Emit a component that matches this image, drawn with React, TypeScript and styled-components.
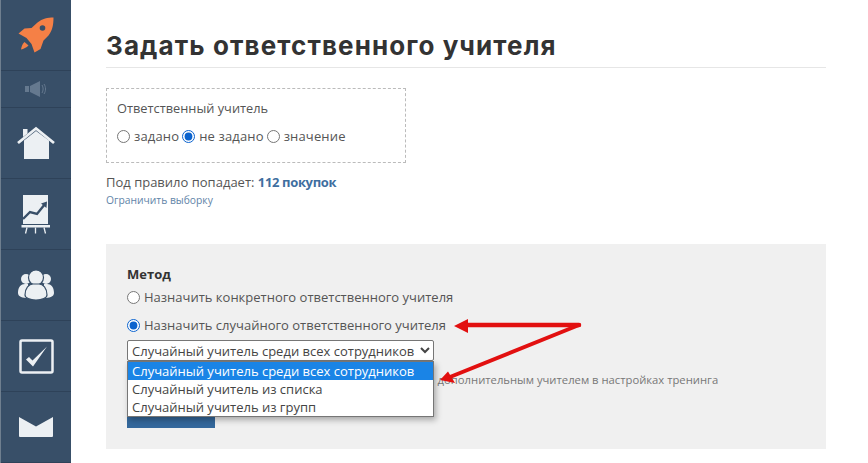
import React from "react";
import styled, { createGlobalStyle } from "styled-components";

const GlobalStyle = createGlobalStyle`
  html, body {
    margin: 0;
    padding: 0;
    background: #fff;
    overflow: hidden;
  }
  body {
    font-family: "Open Sans", "Noto Sans", "Liberation Sans", sans-serif;
    color: #555;
  }
`;

const options = [
  "Случайный учитель среди всех сотрудников",
  "Случайный учитель из списка",
  "Случайный учитель из групп",
];

const App = () => {
  return (
    <Page>
      <GlobalStyle />
      <Sidebar>
        <LogoCell>
          <svg width="38" height="38" viewBox="17.500 15.500 38 38">
            <path
              d="M54 17C48 17 43 18 38 22L32 27.500 25 28 19 33 27 37.500 32 43.500 35 52 41 48.500 44 40 49 35C53 30 54 24 54 17Z"
              fill="#f58046"
            />
            <circle cx="43" cy="27.500" r="2.800" fill="#384f68" />
            <path d="M21.500 49C22 46 23 43 25 41.500L29 45C27 47 24 48.500 21.500 49Z" fill="#f58046" />
          </svg>
        </LogoCell>
        <SoundCell>
          <svg width="24" height="16" viewBox="0 0 24 16">
            <rect x="1" y="5" width="4" height="6" fill="#65798f" />
            <path d="M6 5l10-5v16L6 11z" fill="#65798f" />
            <path d="M18 4c1.500 2.500 1.500 5.500 0 8M20 3c2 3 2 7 0 10" fill="none" stroke="#65798f" />
          </svg>
        </SoundCell>
        <NavCell>
          <svg width="38" height="34" viewBox="0 0 38 34">
            <path d="M7 14.500L19 5l13 9.500V33H7z" fill="#ecf0f3" />
            <path d="M1 17L19 2.500 37 17" fill="none" stroke="#ecf0f3" strokeWidth="2.800" />
            <path d="M6 3h4.500v4.500L6 11z" fill="#ecf0f3" />
          </svg>
        </NavCell>
        <NavCell>
          <svg width="30" height="39" viewBox="0 0 30 39">
            <rect x="2" y="0" width="25" height="29" fill="#ecf0f3" />
            <path d="M2 24l7-7 7 2 8-10" fill="none" stroke="#384f68" strokeWidth="2.400" />
            <path d="M20 8.500L26 6.500l-.5 6.500z" fill="#384f68" />
            <rect x="0.500" y="30" width="28.500" height="2.500" fill="#ecf0f3" />
            <path d="M6 32.500l-1.500 6M14.500 32.500v6M23 32.500l1.500 6" stroke="#ecf0f3" strokeWidth="1.300" />
          </svg>
        </NavCell>
        <NavCell>
          <svg width="36" height="30" viewBox="0 0 36 30">
            <circle cx="8" cy="9" r="5" fill="#ecf0f3" />
            <circle cx="28" cy="9" r="5" fill="#ecf0f3" />
            <path d="M0 23c0-6 3-9 7-9h3v14c-5 0-10-1-10-5zM36 23c0-6-3-9-7-9h-3v14c5 0 10-1 10-5z" fill="#ecf0f3" />
            <path d="M18 0a7.500 7.500 0 0 1 0 15 7.500 7.500 0 0 1 0-15z" fill="#ecf0f3" stroke="#384f68" strokeWidth="1.200" />
            <path d="M7 25c0-7 4-11 8-11h6c4 0 8 4 8 11 0 3-5 5-11 5S7 28 7 25z" fill="#ecf0f3" stroke="#384f68" strokeWidth="1.200" />
          </svg>
        </NavCell>
        <NavCell>
          <svg width="35" height="35" viewBox="0 0 35 35">
            <rect x="1.500" y="1.500" width="32" height="32" rx="1.500" fill="none" stroke="#ecf0f3" strokeWidth="2.500" />
            <path d="M7 20.500l3-2.500 3.500 3.500L28 7.500 14 27.500z" fill="#ecf0f3" />
          </svg>
        </NavCell>
        <NavCell>
          <svg width="34" height="20" viewBox="0 0 34 20">
            <path d="M0 0l17 9.500L34 0v19a1 1 0 0 1-1 1H1a1 1 0 0 1-1-1z" fill="#ecf0f3" />
          </svg>
        </NavCell>
      </Sidebar>

      <Main>
        <Title>Задать ответственного учителя</Title>
        <FilterBox>
          <FilterLabel>Ответственный учитель</FilterLabel>
          <RadioRow>
            <RadioLabel>
              <Radio name="teacher" />
              задано
            </RadioLabel>
            <RadioLabel>
              <Radio name="teacher" defaultChecked />
              не задано
            </RadioLabel>
            <RadioLabel>
              <Radio name="teacher" />
              значение
            </RadioLabel>
          </RadioRow>
        </FilterBox>
        <Summary>
          Под правило попадает: <strong>112 покупок</strong>
        </Summary>
        <LimitLink>Ограничить выборку</LimitLink>

        <Panel>
          <PanelTitle>Метод</PanelTitle>
          <MethodLabel>
            <Radio name="method" />
            Назначить конкретного ответственного учителя
          </MethodLabel>
          <MethodLabel>
            <Radio name="method" defaultChecked />
            Назначить случайного ответственного учителя
          </MethodLabel>
          <Select defaultValue={options[0]}>
            {options.map((o) => (
              <option key={o}>{o}</option>
            ))}
          </Select>
          <Hint>
            Ответственный учитель будет автоматически назначен дополнительным учителем в настройках тренинга
          </Hint>
          <SaveButton />
          <Menu>
            {options.map((o, i) => (
              <MenuItem key={o} $active={i === 0}>
                {o}
              </MenuItem>
            ))}
          </Menu>
        </Panel>
      </Main>

      <Arrows width="868" height="463" viewBox="0 0 868 463">
        <path d="M579 325H466" fill="none" stroke="#e21010" strokeWidth="4.500" strokeLinecap="round" />
        <path d="M454 326l14-7v14z" fill="#e21010" />
        <path d="M579 325L450 377" fill="none" stroke="#e21010" strokeWidth="4" strokeLinecap="round" />
        <path d="M440 380l8-8.500 7 11.500z" fill="#e21010" />
      </Arrows>
    </Page>
  );
};

// --- Styled Components ---

const Page = styled.div`
  position: relative;
  display: flex;
  width: 868px;
  height: 463px;
  overflow: hidden;
`;

const Sidebar = styled.nav`
  flex: 0 0 71px;
  box-sizing: border-box;
  background: #384f68;
  border-left: 1px solid #6f7f8f;
  display: flex;
  flex-direction: column;
`;

const Cell = styled.div`
  display: flex;
  align-items: center;
  justify-content: center;
  box-sizing: border-box;
  flex: none;
  border-bottom: 1px solid #2e4259;
`;

const LogoCell = styled(Cell)`
  height: 71px;
`;

const SoundCell = styled(Cell)`
  height: 37px;
`;

const NavCell = styled(Cell)`
  height: 71px;
`;

const Main = styled.main`
  flex: 0 0 720px;
  margin-left: 35px;
  padding-top: 29px;
`;

const Title = styled.h1`
  margin: 0;
  height: 39px;
  box-sizing: border-box;
  border-bottom: 1px solid #e6e6e6;
  font-family: "Inter", "Noto Sans", sans-serif;
  font-size: 26px;
  line-height: 33px;
  font-weight: 700;
  letter-spacing: 1.100px;
  color: #333;
`;

const FilterBox = styled.div`
  box-sizing: border-box;
  width: 300px;
  height: 75px;
  margin-top: 20px;
  padding: 11px 10px;
  border: 1px dashed #bbb;
`;

const FilterLabel = styled.div`
  font-size: 12.800px;
  line-height: 17px;
`;

const RadioRow = styled.div`
  display: flex;
  gap: 3px;
  margin-top: 10px;
`;

const RadioLabel = styled.label`
  display: flex;
  align-items: center;
  gap: 4px;
  font-size: 13px;
  line-height: 18px;
  letter-spacing: 0.150px;
`;

const Radio = styled.input.attrs({ type: "radio" })`
  width: 13px;
  height: 13px;
  margin: 0;
  accent-color: #0b63ce;
  flex: none;
`;

const Summary = styled.div`
  margin-top: 10px;
  font-size: 13px;
  line-height: 18px;

  strong {
    font-weight: 700;
    letter-spacing: -0.350px;
    color: #3f6f9f;
  }
`;

const LimitLink = styled.div`
  margin-top: 1px;
  font-size: 10.300px;
  line-height: 17px;
  color: #5f84a8;
`;

const Panel = styled.section`
  position: relative;
  box-sizing: border-box;
  height: 205px;
  margin-top: 35px;
  padding: 21px 21px 0;
  background: #f0f0f0;
`;

const PanelTitle = styled.div`
  font-size: 13px;
  line-height: 18px;
  font-weight: 700;
  color: #333;
`;

const MethodLabel = styled.label`
  display: flex;
  align-items: center;
  gap: 4px;
  margin-top: 5px;
  margin-bottom: 10px;
  font-size: 13px;
  line-height: 18px;
`;

const Select = styled.select`
  display: block;
  box-sizing: border-box;
  width: 307px;
  height: 21px;
  padding: 0;
  margin-top: -4px;
  border: 1px solid #767676;
  border-radius: 2px;
  background: #fff;
  font-family: inherit;
  font-size: 13px;
  color: #444;
`;

const Hint = styled.div`
  margin-top: 12px;
  font-size: 11.250px;
  line-height: 14px;
  color: #777;
  white-space: nowrap;
`;

const SaveButton = styled.div`
  width: 88px;
  height: 34px;
  margin-top: 7px;
  background: #34689c;
`;

const Menu = styled.div`
  position: absolute;
  left: 21px;
  top: 117px;
  width: 307px;
  box-sizing: border-box;
  border: 1px solid #767676;
  background: #fff;
  box-shadow: 2px 3px 6px rgba(0, 0, 0, 0.3);
`;

const MenuItem = styled.div<{ $active?: boolean }>`
  height: 18px;
  padding-left: 4px;
  font-size: 13px;
  line-height: 18px;
  white-space: nowrap;
  background: ${(p) => (p.$active ? "#1a84e6" : "#fff")};
  color: ${(p) => (p.$active ? "#fff" : "#444")};
`;

const Arrows = styled.svg`
  position: absolute;
  left: 0;
  top: 0;
  pointer-events: none;
`;

export default App;
